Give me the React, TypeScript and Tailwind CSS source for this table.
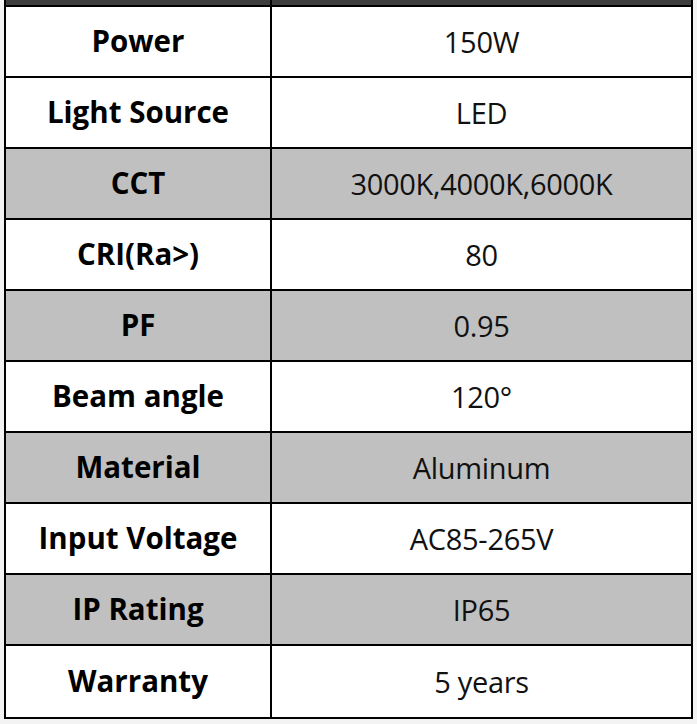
const specs = [
  { label: "Power", value: "150W", shaded: false },
  { label: "Light Source", value: "LED", shaded: false },
  { label: "CCT", value: "3000K,4000K,6000K", shaded: true },
  { label: "CRI(Ra>)", value: "80", shaded: false },
  { label: "PF", value: "0.95", shaded: true },
  { label: "Beam angle", value: "120°", shaded: false },
  { label: "Material", value: "Aluminum", shaded: true },
  { label: "Input Voltage", value: "AC85-265V", shaded: false },
  { label: "IP Rating", value: "IP65", shaded: true },
  { label: "Warranty", value: "5 years", shaded: false },
];

export default function App() {
  return (
    <div className="w-[697px] h-[724px] bg-[#f3f3f3]" style={{ fontFamily: '"Open Sans", "Noto Sans", sans-serif' }}>
      <div className="ml-[4px] w-[689px] border-x-2 border-b-2 border-black">
        <div className="h-[7px] grid grid-cols-[266px_1fr] bg-[#3d3d3d] border-b-2 border-black">
          <div className="border-r-2 border-black" />
          <div />
        </div>
        {specs.map((s, i) => (
          <div
            key={s.label}
            className={`h-[71px] grid grid-cols-[266px_1fr] ${i < specs.length - 1 ? "border-b-2 border-black" : ""} ${s.shaded ? "bg-[#c0c0c0]" : "bg-white"}`}
          >
            <div className="border-r-2 border-black flex items-center justify-center text-[29.5px] font-bold text-black">
              {s.label}
            </div>
            <div className="flex items-center justify-center text-[29px] text-[#111111] tracking-[-0.3px]">
              {s.value}
            </div>
          </div>
        ))}
      </div>
    </div>
  );
}
